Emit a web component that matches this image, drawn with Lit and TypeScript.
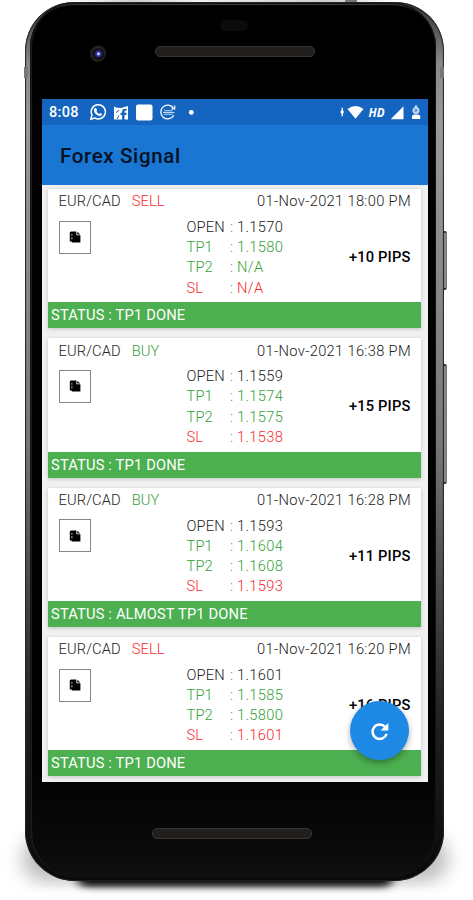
import { LitElement, html, css, svg } from "lit";
import { customElement, property } from "lit/decorators.js";

interface Signal {
  pair: string;
  side: "SELL" | "BUY";
  time: string;
  open: string;
  tp1: string;
  tp2: string;
  sl: string;
  pips: string;
  status: string;
}

const SIGNALS: Signal[] = [
  { pair: "EUR/CAD", side: "SELL", time: "01-Nov-2021 18:00 PM", open: "1.1570", tp1: "1.1580", tp2: "N/A", sl: "N/A", pips: "+10 PIPS", status: "TP1 DONE" },
  { pair: "EUR/CAD", side: "BUY", time: "01-Nov-2021 16:38 PM", open: "1.1559", tp1: "1.1574", tp2: "1.1575", sl: "1.1538", pips: "+15 PIPS", status: "TP1 DONE" },
  { pair: "EUR/CAD", side: "BUY", time: "01-Nov-2021 16:28 PM", open: "1.1593", tp1: "1.1604", tp2: "1.1608", sl: "1.1593", pips: "+11 PIPS", status: "ALMOST TP1 DONE" },
  { pair: "EUR/CAD", side: "SELL", time: "01-Nov-2021 16:20 PM", open: "1.1601", tp1: "1.1585", tp2: "1.5800", sl: "1.1601", pips: "+16 PIPS", status: "TP1 DONE" },
];

@customElement("signal-card")
export class SignalCard extends LitElement {
  @property({ attribute: false }) signal!: Signal;

  static styles = css`
    :host {
      display: flex;
      flex-direction: column;
      height: 139.3px;
      background: #fff;
      box-shadow: 0 1px 4px rgba(0, 0, 0, 0.2);
      font: 300 14.7px/20.2px Roboto, "Liberation Sans", sans-serif;
      color: #222;
    }
    .head {
      display: flex;
      height: 26px;
      padding: 2.3px 9.5px 0 10.5px;
      box-sizing: border-box;
      letter-spacing: 0.1px;
    }
    .side { margin-left: 11px; }
    .time { margin-left: auto; letter-spacing: 0.32px; }
    .body { display: flex; flex: 1; padding: 0 10px 0 10.5px; }
    .note {
      width: 30px;
      height: 31px;
      margin-top: 5.5px;
      border: 1px solid #858585;
      display: grid;
      place-items: center;
    }
    .levels {
      display: grid;
      grid-template-columns: 43.5px auto;
      grid-auto-rows: 20.2px;
      margin: 1.8px 0 0 96px;
      letter-spacing: 0.15px;
    }
    .levels span { white-space: nowrap; }
    .green { color: #35a13a; }
    .red { color: #f9282d; }
    .colon { color: #777; }
    .levels .val { letter-spacing: 0.32px; }
    .pips {
      margin: 32px 0 0 auto;
      font-weight: 500;
      font-size: 14.7px;
      letter-spacing: 0.15px;
      color: #000;
    }
    .status {
      height: 26px;
      padding-left: 3px;
      background: #4caf50;
      color: #fff;
      font-size: 14.7px;
      font-weight: 400;
      letter-spacing: 0.16px;
      line-height: 27px;
    }
  `;

  private row(label: string, value: string, tone: string) {
    return html`<span class=${tone}>${label}</span
      ><span class=${tone}><span class="colon">: </span><span class="val">${value}</span></span>`;
  }

  render() {
    const s = this.signal;
    return html`
      <div class="head">
        <span>${s.pair}</span>
        <span class="side ${s.side === "SELL" ? "red" : "green"}">${s.side}</span>
        <span class="time">${s.time}</span>
      </div>
      <div class="body">
        <div class="note">
          <svg width="12" height="12" viewBox="0 0 12 12">
            <path d="M.8 1.2 2 .4H7.4V4.3H11.4V11.4H2.8V10.4H.8Z" fill="#000" />
            <path d="M8.3.8 11.2 3.5H8.3Z" fill="#000" />
            <path d="M2.9 2.8v2M2.9 6v2.5" stroke="#bbb" stroke-width=".9" />
          </svg>
        </div>
        <div class="levels">
          ${this.row("OPEN", s.open, "")} ${this.row("TP1", s.tp1, "green")}
          ${this.row("TP2", s.tp2, "green")} ${this.row("SL", s.sl, "red")}
        </div>
        <span class="pips">${s.pips}</span>
      </div>
      <div class="status">STATUS : ${s.status}</div>
    `;
  }
}

@customElement("app-root")
export class AppRoot extends LitElement {
  static styles = css`
    :host {
      display: block;
      position: relative;
      width: 473px;
      height: 900px;
      overflow: hidden;
      background: #fff;
      font-family: Roboto, "Liberation Sans", sans-serif;
    }
    .shadow {
      position: absolute;
      left: 76px;
      top: 862px;
      width: 318px;
      height: 25px;
      border-radius: 30px;
      background: #000;
      filter: blur(5px);
    }
    .haze {
      position: absolute;
      left: 22px;
      top: 835px;
      width: 426px;
      height: 47px;
      border-radius: 40px;
      background: rgba(0, 0, 0, 0.26);
      filter: blur(9px);
    }
    .floor {
      position: absolute;
      left: 0;
      top: 886px;
      width: 473px;
      height: 14px;
      background: linear-gradient(rgba(255, 255, 255, 0), #fff 11px);
    }
    .key {
      position: absolute;
      left: 441px;
      width: 6px;
      box-sizing: border-box;
      border: solid #333;
      border-width: 2px 1px 2px 0;
      border-right-color: #777;
      border-radius: 0 2px 2px 0;
      background: #888;
    }
    .power { top: 231px; height: 59px; }
    .volume { top: 364px; height: 120px; }
    .band {
      position: absolute;
      top: 67px;
      width: 4px;
      height: 11px;
      background: #777;
    }
    .band.l { left: 24px; }
    .band.r { left: 440px; }
    .nub {
      position: absolute;
      left: 345px;
      top: 0;
      width: 12px;
      height: 5px;
      background: #777;
    }
    .glare {
      position: absolute;
      left: 66px;
      top: 0;
      width: 330px;
      height: 5px;
      background: linear-gradient(90deg, #fff, #ccc 20%, #eee 40%, #ccc 80%, #fff);
    }
    .phone {
      position: absolute;
      left: 25px;
      top: 2px;
      width: 419px;
      height: 879px;
      box-sizing: border-box;
      padding: 1px 8px 3px 5px;
      border-radius: 49px 49px 50px 50px;
      background: linear-gradient(#303030, #8a8a8a 7%, #999 14%, #777 50%, #444 68%, #202020 82%, #080808);
      box-shadow: inset 0 0 1px 1px #222;
    }
    .face {
      height: 100%;
      box-sizing: border-box;
      display: flex;
      flex-direction: column;
      border-radius: 44px 44px 46px 46px;
      background: linear-gradient(#000 85%, #0a0a0a 97%, #111);
      box-shadow: inset 0 0 0 1px #111, inset 0 7px 1px -5px #3c3c3c, inset 3px 0 1px -1px #222, inset -2px 0 1px -1px #222;
      padding: 0 8px 0 12px;
    }
    .top { position: relative; height: 96px; flex: none; }
    .camera {
      position: absolute;
      left: 46px;
      top: 41px;
      width: 18px;
      height: 18px;
      border-radius: 50%;
      background: radial-gradient(circle at 58% 55%, #c8d0ff 0 0.8px, #3439a0 2px, #151836 4px, #0a0a12 5px, #242424 6.5px, #1b1b1b 8px, #000 9px);
    }
    .sensor {
      position: absolute;
      left: 178px;
      top: 17px;
      width: 28px;
      height: 11px;
      border-radius: 6px;
      background: #0a0b0d;
    }
    .slot {
      width: 160px;
      height: 11px;
      box-sizing: border-box;
      border: 1px solid #393631;
      border-radius: 5px;
      background: #201f1d;
    }
    .top .slot { position: absolute; left: 113px; top: 43px; }
    .bottom .slot { margin: 46px 0 0 110px; }
    .screen {
      position: relative;
      height: 683px;
      flex: none;
      overflow: hidden;
      background: #f1f1f1;
    }
    .statusbar {
      display: flex;
      align-items: center;
      height: 26px;
      padding: 0 6px 0 7px;
      background: #1565c0;
      color: #fff;
    }
    .clock { font-size: 14.5px; font-weight: 500; letter-spacing: 0.3px; width: 41px; }
    .spacer { flex: 1; }
    .appbar {
      height: 60px;
      background: #1976d2;
      color: #051223;
      font-size: 20.5px;
      font-weight: 500;
      line-height: 62px;
      padding-left: 18px;
      letter-spacing: 0.65px;
    }
    .list {
      display: flex;
      flex-direction: column;
      gap: 10px;
      padding: 4.2px 7.5px 0 6px;
    }
    .fab {
      position: absolute;
      left: 308px;
      top: 602px;
      width: 59px;
      height: 59px;
      border-radius: 50%;
      background: #1e88e5;
      box-shadow: 0 3px 6px rgba(0, 0, 0, 0.32);
      display: grid;
      place-items: center;
    }
  `;

  private leftIcons() {
    return svg`<svg width="112" height="26" viewBox="0 0 112 26" fill="none" stroke="#fff">
      <path d="M.7 20.3 2 16.1A7.1 7.1 0 1 1 4.8 19Z" stroke-width="1.5"/>
      <path d="M4.4 9.4 5.8 8.8 7.2 11.2 6.4 12.3Q7.4 14.3 9.4 15L10.5 14 12.2 15.1Q11.7 17.2 9.7 17.1 4.2 15.5 3.8 10.7Z" fill="#fff" stroke="none"/>
      <path d="M24 7.5 27 8.7 31 9 38 7V20.5H34.5V16H36.5V13.8H34.5V12.4Q34.5 11.4 36.7 11.5V9.7Q32.1 9.2 32.1 12.3V13.8H30.5V16H32.1V20.5H24Z" fill="#fff" stroke="none"/>
      <path d="M29 11 26 13.6M27 20 29 16.5" stroke="#1565c0"/>
      <rect x="46" y="5.5" width="16.5" height="16" rx="2" fill="#fff" stroke="none"/>
      <path d="M83.5 9.2A6.9 6.9 0 1 0 83.8 16.2" stroke-width="1.3"/>
      <path d="M81.5 9.8 84.8 9.8 84.7 6.5" stroke-width="1.2"/>
      <path d="M74 11.8H82.5M73 13.5H84.5M74 15.3H82.5" stroke-width="1.1" stroke="#c5daf5"/>
      <circle cx="101.3" cy="13.4" r="2.4" fill="#fff" stroke="none"/>
    </svg>`;
  }

  private wifi() {
    return svg`<svg width="25" height="26" viewBox="0 0 25 26" fill="#fff">
      <path d="M1.6 8 3 9.4V11.6L4 13 3 14.4V16.6L1.6 18V15L.7 14V12L1.6 11Z"/>
      <path d="M7.5 10Q15.5 3.8 23.5 10L15.5 19.7Z"/>
    </svg>`;
  }

  private signalIcons() {
    return svg`<svg width="32" height="26" viewBox="0 0 32 26" fill="#fff">
      <path d="M13.5 7.3V20.2H.7Z"/>
      <circle cx="26" cy="11.5" r="3.5" opacity=".75"/>
      <circle cx="26" cy="7.5" r="1.4" opacity=".6"/>
      <path d="M22 20V17.2Q22.4 15.5 24.5 15.5H27.5Q30 15.5 30.2 17.2V20Z"/>
      <path d="M24.3 10 27 12.3M27.3 10 24.8 13" stroke="#1565c0" stroke-width=".8"/>
    </svg>`;
  }

  render() {
    return html`
      <div class="glare"></div>
      <div class="haze"></div>
      <div class="shadow"></div>
      <div class="floor"></div>
      <div class="nub"></div>
      <div class="key power"></div>
      <div class="key volume"></div>
      <div class="phone">
        <div class="face">
          <div class="top">
            <div class="sensor"></div>
            <div class="camera"></div>
            <div class="slot"></div>
          </div>
          <div class="screen">
            <div class="statusbar">
              <span class="clock">8:08</span>
              ${this.leftIcons()}
              <span class="spacer"></span>
              ${this.wifi()}
              <svg width="25" height="26" viewBox="0 0 25 26">
                <text x="3.6" y="17.5" fill="#fff" font-family="Open Sans, Roboto, sans-serif" font-size="12" font-weight="700" font-style="italic" textLength="16" lengthAdjust="spacingAndGlyphs">HD</text>
              </svg>
              ${this.signalIcons()}
            </div>
            <div class="appbar">Forex Signal</div>
            <div class="list">
              ${SIGNALS.map((s) => html`<signal-card .signal=${s}></signal-card>`)}
            </div>
            <div class="fab">
              <svg width="24" height="24" viewBox="0 0 24 24">
                <path d="M17.2 8A7.2 7.2 0 1 0 18.6 14.8" fill="none" stroke="#fff" stroke-width="2.5" />
                <path d="M20.3 4V11.4H12.6Z" fill="#fff" />
              </svg>
            </div>
          </div>
          <div class="bottom"><div class="slot"></div></div>
        </div>
      </div>
      <div class="band l"></div>
      <div class="band r"></div>
    `;
  }
}
